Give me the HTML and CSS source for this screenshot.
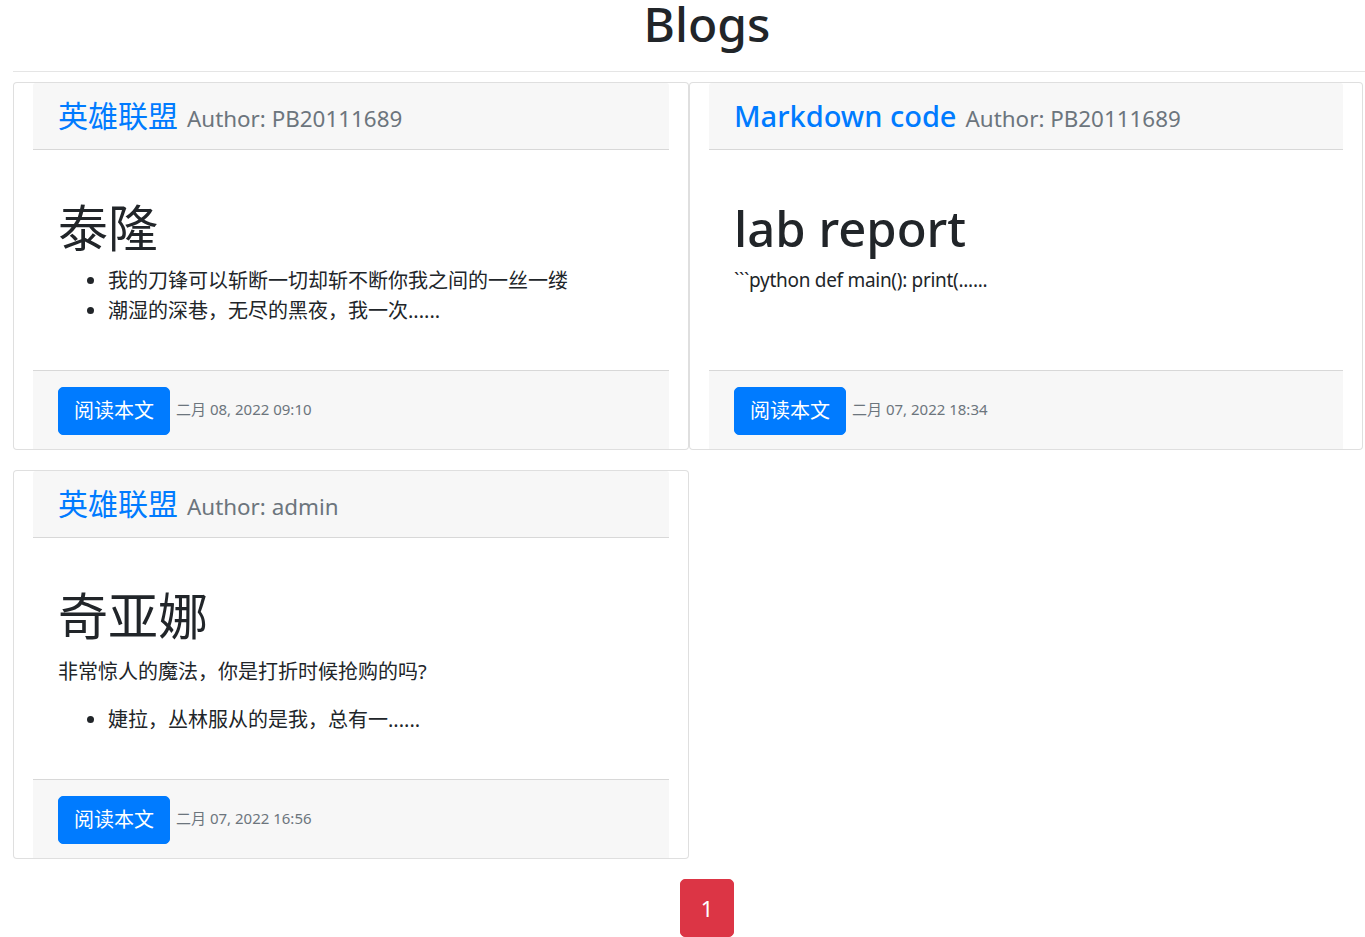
FILE: index.html
```html
<!DOCTYPE html>
<html lang="zh">
<head>
<meta charset="utf-8">
<title>Blogs</title>
<link rel="stylesheet" href="styles.css">
</head>
<body>
<div class="page">
  <h1 class="page-title">Blogs</h1>
  <hr class="divider">
  <div class="cards">
    <div class="card">
      <div class="card-header">
        <a class="card-title" href="#">英雄联盟</a>
        <span class="author">Author: PB20111689</span>
      </div>
      <div class="card-body">
        <h1>泰隆</h1>
        <ul>
          <li>我的刀锋可以斩断一切却斩不断你我之间的一丝一缕</li>
          <li>潮湿的深巷，无尽的黑夜，我一次......</li>
        </ul>
      </div>
      <div class="card-footer">
        <a class="btn" href="#">阅读本文</a>
        <span class="date">二月 08, 2022 09:10</span>
      </div>
    </div>
    <div class="card">
      <div class="card-header">
        <a class="card-title latin" href="#">Markdown code</a>
        <span class="author">Author: PB20111689</span>
      </div>
      <div class="card-body">
        <h1 class="latin">lab report</h1>
        <p class="latin">```python def main(): print(......</p>
      </div>
      <div class="card-footer">
        <a class="btn" href="#">阅读本文</a>
        <span class="date">二月 07, 2022 18:34</span>
      </div>
    </div>
    <div class="card">
      <div class="card-header">
        <a class="card-title" href="#">英雄联盟</a>
        <span class="author">Author: admin</span>
      </div>
      <div class="card-body">
        <h1>奇亚娜</h1>
        <p class="intro">非常惊人的魔法，你是打折时候抢购的吗?</p>
        <ul>
          <li>婕拉，丛林服从的是我，总有一......</li>
        </ul>
      </div>
      <div class="card-footer">
        <a class="btn" href="#">阅读本文</a>
        <span class="date">二月 07, 2022 16:56</span>
      </div>
    </div>
  </div>
  <nav class="pagination">
    <a class="page-link" href="#">1</a>
  </nav>
</div>
</body>
</html>
```
FILE: styles.css
```css
html, body {
  margin: 0;
  overflow-x: hidden;
}
body {
  font-family: "Noto Sans", "Noto Sans CJK SC", sans-serif;
  color: #212529;
  font-size: 20px;
  line-height: 1.5;
  background: #fff;
}
.page {
  width: 1388px;
  padding-left: 13px;
}
.page-title {
  margin: 0 0 24px;
  text-align: center;
  font-size: 48px;
  font-weight: 500;
  line-height: 47px;
}
.divider {
  margin: 0 0 10px;
  border: 0;
  border-top: 1px solid rgba(0, 0, 0, 0.1);
}
.cards {
  display: grid;
  grid-template-columns: 676px 674px;
  column-gap: 0;
  row-gap: 20px;
  align-items: stretch;
}
.card {
  display: flex;
  flex-direction: column;
  border: 1px solid rgba(0, 0, 0, 0.125);
  border-radius: 4px;
  padding: 0 19px;
  background: #fff;
}
.card-header {
  display: flex;
  align-items: baseline;
  gap: 9px;
  height: 36px;
  background: #f7f7f7;
  border-bottom: 1px solid rgba(0, 0, 0, 0.125);
  padding: 15px 25px;
  line-height: 36px;
  white-space: nowrap;
  border-radius: 3px 3px 0 0;
}
.card-title {
  color: #007bff;
  text-decoration: none;
  font-size: 30px;
}
.card-title.latin {
  font-weight: 500;
  font-size: 29px;
}
.author {
  color: #6c757d;
  font-size: 22.4px;
}
.card-body {
  flex: 1;
  padding: 48px 25px 28px;
}
.card-body h1 {
  margin: 0 0 8px;
  font-size: 50px;
  font-weight: 400;
  line-height: 60px;
}
.card-body h1.latin {
  font-weight: 500;
  font-size: 49px;
}
.card-body p {
  margin: 0 0 18px;
}
.card-body p.latin {
  font-size: 19px;
  letter-spacing: -0.3px;
}
.card-body p.intro {
  padding-top: 3px;
}
.card-body ul {
  margin: 0 0 16px;
  padding-left: 50px;
}
.card-footer {
  background: #f7f7f7;
  border-top: 1px solid rgba(0, 0, 0, 0.125);
  padding: 16px 25px 14px;
  display: flex;
  align-items: center;
  gap: 6px;
}
.btn {
  display: inline-block;
  background: #007bff;
  border: 1px solid #007bff;
  color: #fff;
  text-decoration: none;
  font-size: 20px;
  line-height: 30px;
  padding: 8px 15px;
  border-radius: 5px;
}
.date {
  color: #6c757d;
  font-size: 15px;
  margin-top: -3px;
}
.pagination {
  display: flex;
  justify-content: center;
  margin-top: 20px;
}
.page-link {
  display: block;
  background: #dc3545;
  border: 1px solid #dc3545;
  color: #fff;
  text-decoration: none;
  font-size: 22px;
  line-height: 32px;
  padding: 12px 20px;
  border-radius: 5px;
}
```
